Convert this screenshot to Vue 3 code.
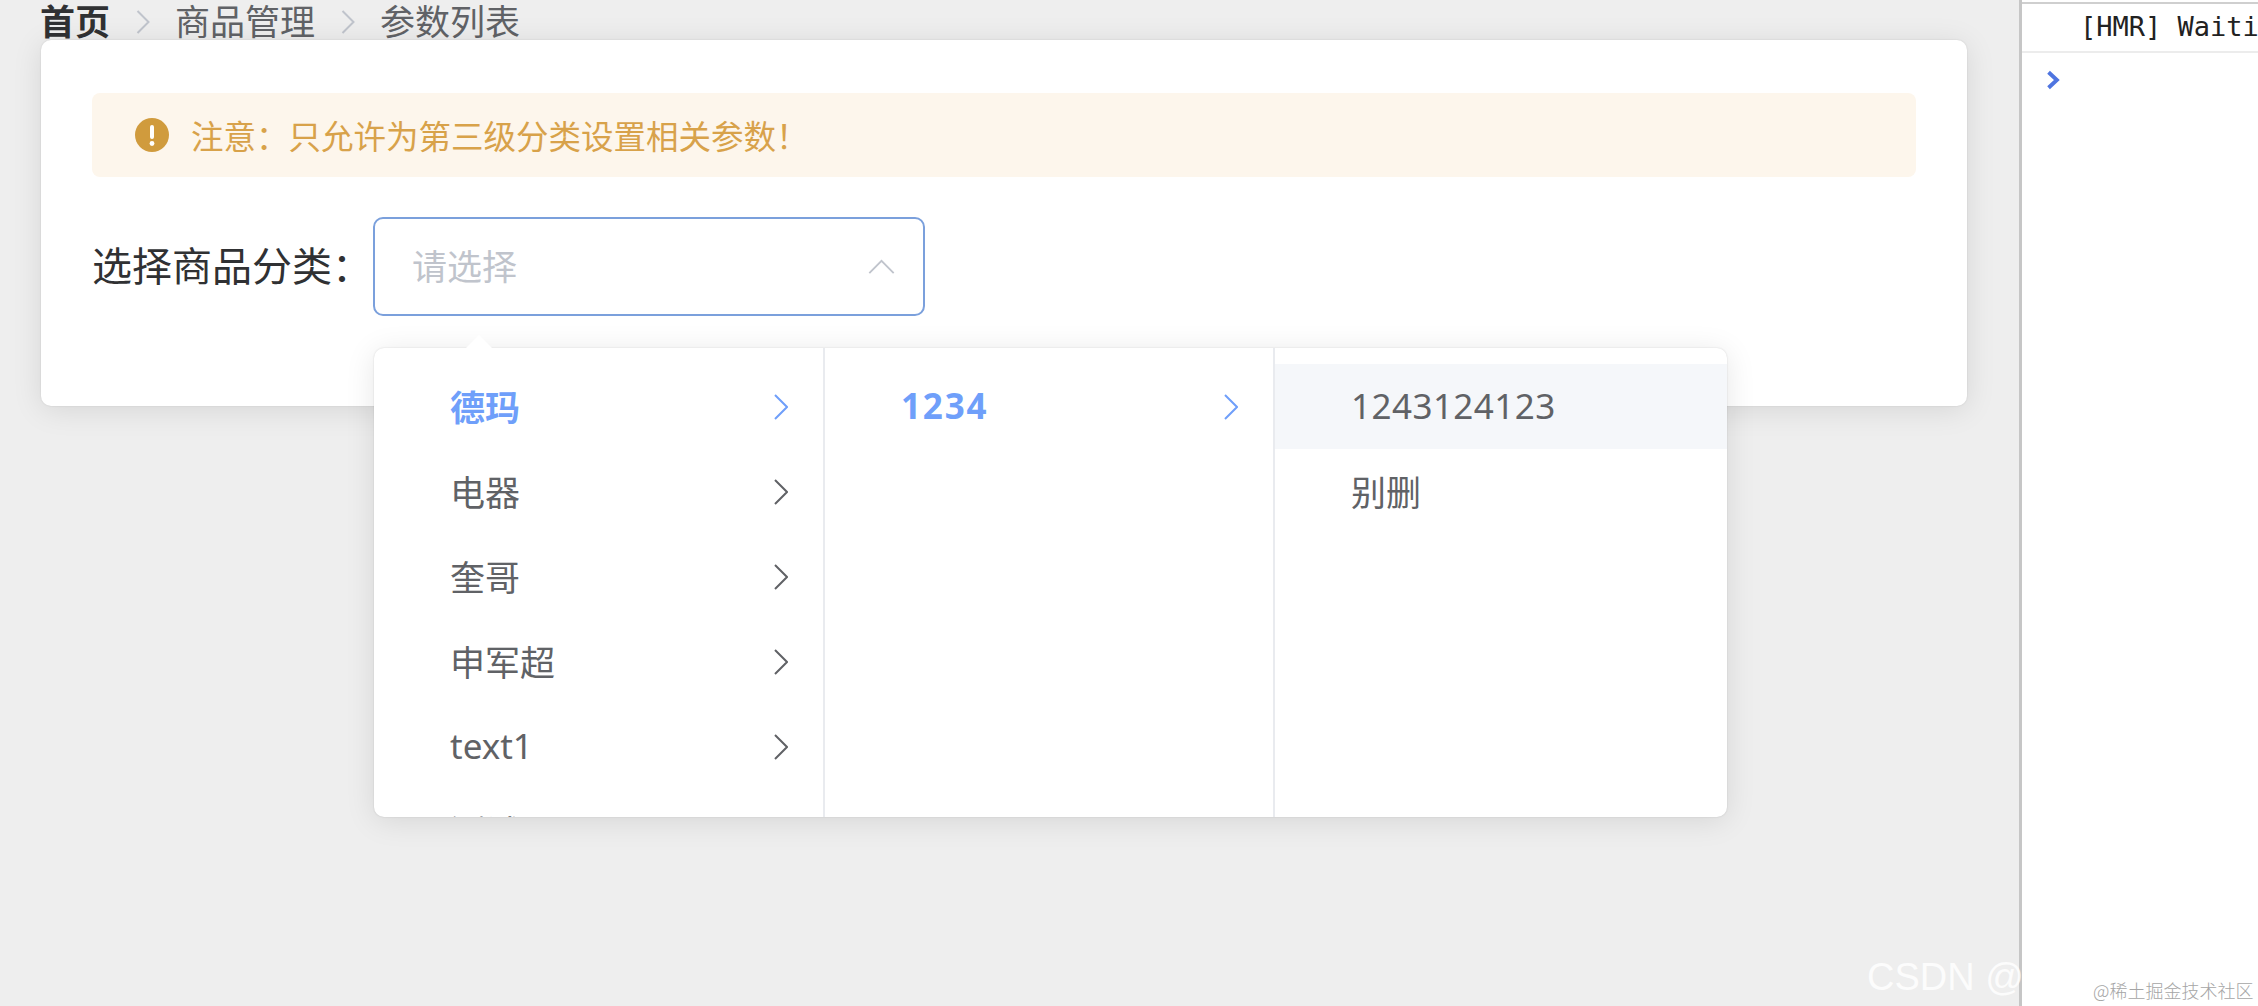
<script setup>
const col1 = ['德玛', '电器', '奎哥', '申军超', 'text1', '测试']
</script>

<template>
  <div class="page">
    <main class="main">
      <nav class="crumbs">
        <strong class="crumb-home">首页</strong>
        <svg class="crumb-sep" viewBox="0 0 14 24"><path d="M1.5 1 L12.5 12 L1.5 23" /></svg>
        <span>商品管理</span>
        <svg class="crumb-sep" viewBox="0 0 14 24"><path d="M1.5 1 L12.5 12 L1.5 23" /></svg>
        <span>参数列表</span>
      </nav>
      <section class="card">
        <div class="alert">
          <svg class="alert-icon" viewBox="0 0 34 34">
            <circle cx="17" cy="17" r="17" fill="#d09b3d" />
            <rect x="15" y="7" width="4" height="14" rx="2" fill="#fff" />
            <circle cx="17" cy="25.5" r="2.4" fill="#fff" />
          </svg>
          <span>注意：只允许为第三级分类设置相关参数！</span>
        </div>
        <div class="form-row">
          <label class="label">选择商品分类：</label>
          <div class="select-wrap">
            <div class="select">
              <span class="placeholder">请选择</span>
              <svg class="caret" viewBox="0 0 28 16"><path d="M1 15 L14 2 L27 15" /></svg>
            </div>
            <div class="arrow"></div>
            <div class="panel">
              <ul class="col">
                <li v-for="(name, i) in col1" :key="name" class="item" :class="{ active: i === 0 }">
                  <span>{{ name }}</span>
                  <svg class="chev" viewBox="0 0 14 26"><path d="M1 1 L13 13 L1 25" /></svg>
                </li>
              </ul>
              <ul class="col">
                <li class="item active">
                  <span class="num-bold">1234</span>
                  <svg class="chev" viewBox="0 0 14 26"><path d="M1 1 L13 13 L1 25" /></svg>
                </li>
              </ul>
              <ul class="col">
                <li class="item hover"><span class="num">1243124123</span></li>
                <li class="item"><span>别删</span></li>
              </ul>
            </div>
          </div>
        </div>
      </section>
    </main>
    <aside class="console">
      <div class="console-line">[HMR] Waiting for update signal from WDS...</div>
      <svg class="prompt" viewBox="0 0 12 18"><path d="M2 2 L9.5 9 L2 16" /></svg>
    </aside>
    <div class="wm-csdn">CSDN @C</div>
    <div class="wm-juejin">@稀土掘金技术社区</div>
  </div>
</template>

<style>
html, body { margin: 0; height: 100%; overflow: hidden; background: #eee; }
</style>

<style scoped>
.page {
  width: 2258px;
  height: 1006px;
  display: flex;
  background: #eee;
  font-family: "Noto Sans", "Noto Sans CJK SC", sans-serif;
  overflow: hidden;
  position: relative;
}
.main { width: 2019px; flex: none; padding-left: 41px; box-sizing: border-box; }
.crumbs {
  height: 40px;
  display: flex;
  align-items: center;
  gap: 25.5px;
  font-size: 35px;
  line-height: 44px;
  color: #606266;
  white-space: nowrap;
  padding-top: 4px;
  box-sizing: border-box;
  margin-left: -1px;
}
.crumb-home { color: #303133; font-weight: 700; }
.crumb-sep { width: 14px; height: 24px; fill: none; stroke: #c0c4cc; stroke-width: 2; }
.card {
  width: 1926px;
  height: 366px;
  box-sizing: border-box;
  padding: 53px 51px 0;
  background: #fff;
  border-radius: 10px;
  box-shadow: 0 0 2px rgba(0, 0, 0, .12), 0 4px 30px rgba(0, 0, 0, .1);
  position: relative;
}
.alert {
  height: 84px;
  display: flex;
  align-items: center;
  gap: 22px;
  padding-left: 43px;
  background: #fdf6ec;
  border-radius: 8px;
  color: #d8a24a;
  font-size: 32.5px;
}
.alert-icon { width: 34px; height: 34px; flex: none; }
.form-row { display: flex; align-items: center; margin-top: 40px; }
.label {
  width: 281px;
  flex: none;
  font-size: 40px;
  color: #303133;
  white-space: nowrap;
  padding-bottom: 5px;
  box-sizing: border-box;
}
.select-wrap { position: relative; }
.select {
  width: 552px;
  height: 99px;
  box-sizing: border-box;
  border: 2px solid #7ba0dc;
  border-radius: 10px;
  display: flex;
  align-items: center;
  justify-content: space-between;
  padding: 0 28px 4px 37px;
  background: #fff;
}
.placeholder { font-size: 35px; color: #c0c4cc; }
.caret { width: 27px; height: 15px; fill: none; stroke: #c0c4cc; stroke-width: 2; margin-top: 4px; }
.arrow {
  position: absolute;
  left: 92px;
  top: 118px;
  width: 0;
  height: 0;
  border-left: 14px solid transparent;
  border-right: 14px solid transparent;
  border-bottom: 14px solid #fff;
  z-index: 3;
}
.panel {
  position: absolute;
  left: 1px;
  top: 131px;
  width: 1353px;
  height: 469px;
  display: flex;
  background: #fff;
  border-radius: 10px;
  box-shadow: 0 0 2px rgba(0, 0, 0, .14), 0 4px 30px rgba(0, 0, 0, .1);
  overflow: hidden;
  box-sizing: border-box;
  z-index: 2;
}
.col {
  width: 451px;
  flex: none;
  margin: 0;
  padding: 16px 0 0;
  list-style: none;
  box-sizing: border-box;
  border-right: 2px solid #e9ebef;
}
.col:nth-child(2) { width: 450px; }
.col:last-child { border-right: 0; flex: 1; }
.item {
  height: 85px;
  display: flex;
  align-items: center;
  justify-content: space-between;
  padding: 0 35px 3px 76px;
  font-size: 35px;
  color: #606266;
  box-sizing: border-box;
}
.item.active { color: #6f9ffa; font-weight: 700; }
.item.hover { background: #f5f7fa; }
.chev { width: 14px; height: 26px; fill: none; stroke: currentColor; stroke-width: 2; margin-top: 4px; }
.num { letter-spacing: .45px; }
.num-bold { letter-spacing: 1.8px; }
.console {
  flex: 1;
  background: #fff;
  border-left: 3px solid #c6c6c6;
  position: relative;
  overflow: hidden;
  box-sizing: border-box;
}
.console-line {
  margin-top: 2px;
  height: 51px;
  box-sizing: border-box;
  border-top: 2px solid #cfcfcf;
  border-bottom: 2px solid #ececec;
  padding-left: 58px;
  font-family: "DejaVu Sans Mono", monospace;
  font-size: 27px;
  line-height: 46px;
  color: #222;
  white-space: nowrap;
}
.prompt {
  display: block;
  width: 14px;
  height: 20px;
  margin: 17px 0 0 24px;
  fill: none;
  stroke: #4f75e0;
  stroke-width: 3.5;
}
.wm-csdn {
  position: absolute;
  left: 1867px;
  top: 955px;
  font-family: "Liberation Sans", sans-serif;
  font-size: 38px;
  line-height: 44px;
  color: #fff;
  opacity: .85;
  white-space: nowrap;
}
.wm-juejin {
  position: absolute;
  left: 2093px;
  top: 978px;
  font-family: "Noto Sans CJK SC", sans-serif;
  font-size: 18px;
  line-height: 24px;
  font-weight: 300;
  color: #a5a5a5;
  white-space: nowrap;
}
</style>
